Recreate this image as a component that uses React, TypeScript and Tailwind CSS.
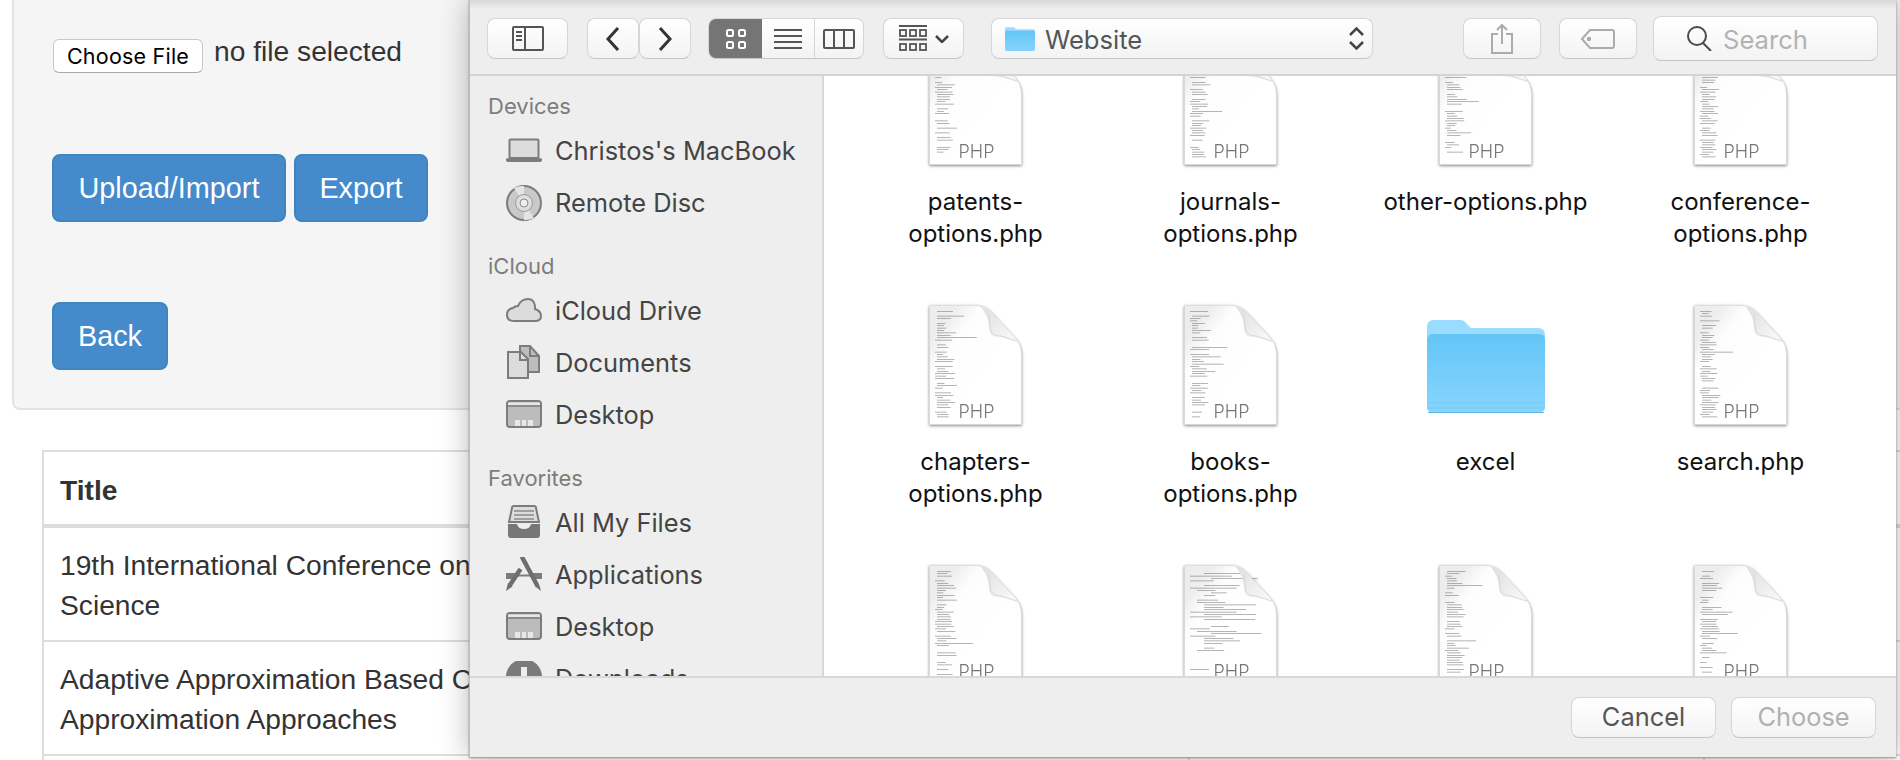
import type { ReactNode } from "react";

const SANS = "font-['Liberation_Sans',Arial,sans-serif]";
const SYS = "font-['Inter','Noto_Sans',sans-serif]";

// fake source code printed on the document thumbnails
function codeLines(seed: number, wide: boolean) {
  const lines: { x: number; y: number; w: number }[] = [];
  let r = seed;
  const next = () => {
    r = (r * 9301 + 49297) % 233280;
    return r / 233280;
  };
  for (let y = 6; y < 114; y += 2.4) {
    const v = next();
    if (v < 0.16) continue;
    const indent = wide ? Math.floor(next() * 4) * 7 : next() < 0.7 ? 2 : 0;
    const len = wide ? 10 + next() * 46 : v > 0.92 ? 18 + next() * 22 : 6 + next() * 14;
    if (y > 92 && indent + len > 20) continue;
    lines.push({ x: 6 + indent, y, w: Math.min(len, 78 - indent) });
  }
  return lines;
}

function DocIcon({ seed, wide = false }: { seed: number; wide?: boolean }) {
  const d = "M0.5 0.5H46Q56 0.5 62 7L86 33Q92.5 40 92.5 50V119.5H0.5Z";
  return (
    <svg width="94" height="124" viewBox="0 0 94 124" className="drop-shadow-[0_1px_1.5px_rgba(0,0,0,0.5)]">
      <defs>
        <linearGradient id="pageFill" x1="0.3" y1="0" x2="0.75" y2="0.45">
          <stop offset="0" stopColor="#ededed" />
          <stop offset="0.3" stopColor="#fdfdfd" />
          <stop offset="1" stopColor="#fff" />
        </linearGradient>
        <linearGradient id="foldFill" x1="0" y1="0" x2="1" y2="1">
          <stop offset="0" stopColor="#dedede" />
          <stop offset="1" stopColor="#ffffff" />
        </linearGradient>
      </defs>
      <path d={d} fill="url(#pageFill)" stroke="#dcdcdc" strokeWidth="0.6" />
      {codeLines(seed, wide).map((l, i) => (
        <rect key={i} x={l.x} y={l.y} width={l.w} height="0.6" fill="#666" opacity="0.8" />
      ))}
      <path d="M52 2Q56 2 62 7L86 33Q90 38 91 42Q80 32 68 32Q60 31 60 24Q60 12 52 2Z" fill="url(#foldFill)" />
      <path d="M60 9Q61 24 62 26Q64 31 72 31L88 36" fill="none" stroke="#d0d0d0" strokeWidth="0.8" />
      <text x="29.5" y="113" fontSize="18" fontWeight="300" fill="#767676" fontFamily="Inter, sans-serif">
        PHP
      </text>
    </svg>
  );
}

function FolderIcon({ width = 118, height = 93 }: { width?: number; height?: number }) {
  return (
    <svg width={width} height={height} viewBox="0 0 118 93">
      <defs>
        <linearGradient id="folderFront" x1="0" y1="0" x2="0" y2="1">
          <stop offset="0" stopColor="#63c5f6" />
          <stop offset="1" stopColor="#88d5fd" />
        </linearGradient>
      </defs>
      <path d="M0 7Q0 0 7 0H33Q37 0 39 3L44 8H111Q118 8 118 15V86Q118 93 111 93H7Q0 93 0 86Z" fill="#9adcff" />
      <path d="M0 20Q0 14 6 14H112Q118 14 118 20V86Q118 93 111 93H7Q0 93 0 86Z" fill="url(#folderFront)" />
      <path d="M0 83H118M0 88H118" stroke="#6ec6f2" strokeWidth="1" opacity="0.7" />
      <path d="M1 92.5H117" stroke="#5fb6e4" strokeWidth="1" />
    </svg>
  );
}

const IC = { stroke: "#7c7c7c", fill: "#dcdcdc", strokeWidth: 2 };

const sidebarIcons: Record<string, ReactNode> = {
  laptop: (
    <>
      <path d="M3.5 7.5Q3.5 6.5 4.5 6.5H31.5Q32.5 6.5 32.5 7.5V25H3.5Z" {...IC} />
      <path d="M0 25.5H36V27Q36 29 34 29H2Q0 29 0 27Z" fill="#7c7c7c" />
    </>
  ),
  disc: (
    <>
      <circle cx="18" cy="18" r="17" fill="#c9c9c9" stroke="#7c7c7c" strokeWidth="2" />
      <path d="M18 18L8 3A18 18 0 0 1 18 1ZM18 18L28 33A18 18 0 0 1 18 35Z" fill="#e4e4e4" />
      <circle cx="18" cy="18" r="8.5" fill="#dedede" stroke="#9a9a9a" strokeWidth="1" />
      <circle cx="18" cy="18" r="4" fill="#eee" stroke="#8a8a8a" strokeWidth="1" />
    </>
  ),
  cloud: <path d="M8 28Q1 28 1 22Q1 16 7 15Q9 13 12 13Q15 6 22 6Q28 6 29 13Q29 15 29 16Q35 18 35 23Q35 28 29 28Z" {...IC} />,
  docs: (
    <>
      <path d="M14 1H24L33 11V27H14Z" fill="#bdbdbd" stroke="#7c7c7c" strokeWidth="2" />
      <path d="M2 7H15L22 14V33H2Z" {...IC} />
      <path d="M14 7V15H22M24 1V11H33" fill="none" stroke="#7c7c7c" strokeWidth="2" />
    </>
  ),
  desktop: (
    <>
      <rect x="1" y="4" width="34" height="26" rx="3" fill="#bcbcbc" stroke="#7c7c7c" strokeWidth="2" />
      <path d="M1 9H35" stroke="#7c7c7c" strokeWidth="1.5" />
      <path d="M2 5.5H34V8H2Z" fill="#e6e6e6" />
      <path d="M9 23H27V29H9Z" fill="#e8e8e8" />
      <path d="M15 23V29M21 23V29" stroke="#8c8c8c" strokeWidth="1" />
    </>
  ),
  files: (
    <>
      <path d="M6 3Q6 1 8 1H28Q30 1 30 3L33 17H3Z" fill="#dcdcdc" stroke="#7c7c7c" strokeWidth="2" />
      <path d="M8 6H28M8 10H28M8 14H28" stroke="#8a8a8a" strokeWidth="1.5" />
      <path d="M2 19H11Q12 24 18 24Q24 24 25 19H34V30Q34 33 31 33H5Q2 33 2 30Z" fill="#777" />
    </>
  ),
  apps: (
    <>
      <path d="M0 16H10L7 22H0ZM26 16H36V22H29Z" fill="#7c7c7c" />
      <path d="M11 18.5H25" stroke="#7c7c7c" strokeWidth="2" />
      <path d="M16.5 1L30.5 27" stroke="#6e6e6e" strokeWidth="4.5" strokeLinecap="round" fill="none" />
      <path d="M28.5 29L33 27L35 34Z" fill="#6e6e6e" />
      <path d="M14.5 12L4 28" stroke="#6e6e6e" strokeWidth="4.5" fill="none" />
      <path d="M2 26L6.5 29.5L0 34Z" fill="#6e6e6e" />
    </>
  ),
  download: (
    <>
      <circle cx="18" cy="16" r="18" fill="#7a7a7a" />
      <path d="M15 6H21V17H27L18 28L9 17H15Z" fill="#eee" />
    </>
  ),
};

const sidebarGroups = [
  {
    title: "Devices",
    items: [
      { label: "Christos's MacBook", icon: "laptop" },
      { label: "Remote Disc", icon: "disc" },
    ],
  },
  {
    title: "iCloud",
    items: [
      { label: "iCloud Drive", icon: "cloud" },
      { label: "Documents", icon: "docs" },
      { label: "Desktop", icon: "desktop" },
    ],
  },
  {
    title: "Favorites",
    items: [
      { label: "All My Files", icon: "files" },
      { label: "Applications", icon: "apps" },
      { label: "Desktop", icon: "desktop" },
      { label: "Downloads", icon: "download" },
    ],
  },
];

const files: { name: string; seed: number; folder?: boolean; wide?: boolean }[] = [
  { name: "patents-options.php", seed: 11 },
  { name: "journals-options.php", seed: 23 },
  { name: "other-options.php", seed: 37 },
  { name: "conference-options.php", seed: 41 },
  { name: "chapters-options.php", seed: 53 },
  { name: "books-options.php", seed: 67 },
  { name: "excel", seed: 0, folder: true },
  { name: "search.php", seed: 79 },
  { name: "index.php", seed: 83 },
  { name: "import.php", seed: 97, wide: true },
  { name: "export.php", seed: 101 },
  { name: "upload.php", seed: 113 },
];

const toolBtn =
  "flex items-center justify-center h-[41px] rounded-lg border border-[#d6d6d6] border-b-[#c4c4c4] bg-linear-to-b from-white to-[#f3f3f3]";

function Toolbar() {
  return (
    <div className="flex items-center h-[76px] shrink-0 pl-[17px] pt-[3px] border-b-2 border-[#d4d4d4] bg-linear-to-b from-[#d8d8d8] via-[#eeeeee] via-[12%] to-[#eeeeee]">
      <button className={`${toolBtn} w-[81px]`}>
        <svg width="32" height="25" viewBox="0 0 32 25" fill="none" stroke="#555" strokeWidth="2">
          <rect x="1" y="1" width="30" height="23" rx="1" />
          <path d="M13 1V24M4 6H10M4 10H10M4 14H10" />
        </svg>
      </button>
      <button className={`${toolBtn} w-[52px] ml-[19px]`}>
        <svg width="14" height="24" viewBox="0 0 14 24" fill="none" stroke="#333" strokeWidth="3">
          <path d="M12 1L2 12L12 23" />
        </svg>
      </button>
      <button className={`${toolBtn} w-[52px]`}>
        <svg width="14" height="24" viewBox="0 0 14 24" fill="none" stroke="#333" strokeWidth="3">
          <path d="M2 1L12 12L2 23" />
        </svg>
      </button>
      <div className={`${toolBtn} w-[156px] ml-[17px] overflow-hidden`}>
        <div className="flex items-center justify-center w-[54px] h-full bg-[#757575]">
          <svg width="20" height="20" viewBox="0 0 20 20" fill="none" stroke="#fff" strokeWidth="2">
            <rect x="1" y="1" width="6" height="6" rx="1.5" />
            <rect x="13" y="1" width="6" height="6" rx="1.5" />
            <rect x="1" y="13" width="6" height="6" rx="1.5" />
            <rect x="13" y="13" width="6" height="6" rx="1.5" />
          </svg>
        </div>
        <div className="flex items-center justify-center w-[53px] h-full border-r border-[#d6d6d6]">
          <svg width="28" height="20" viewBox="0 0 28 20" stroke="#555" strokeWidth="2">
            <path d="M0 1H28M0 7H28M0 13H28M0 19H28" />
          </svg>
        </div>
        <div className="flex items-center justify-center w-[49px] h-full">
          <svg width="32" height="20" viewBox="0 0 32 20" fill="none" stroke="#555" strokeWidth="2">
            <rect x="1" y="1" width="30" height="18" rx="1" />
            <path d="M11 1V19M21 1V19" />
          </svg>
        </div>
      </div>
      <button className={`${toolBtn} w-[81px] ml-[19px] gap-[8px]`}>
        <svg width="28" height="27" viewBox="0 0 28 27" fill="none" stroke="#555" strokeWidth="1.8">
          <path d="M0 1H28M0 14.5H28" strokeWidth="2.2" />
          <rect x="1" y="5" width="6" height="6" />
          <rect x="11" y="5" width="6" height="6" />
          <rect x="21" y="5" width="6" height="6" />
          <rect x="1" y="19" width="6" height="6" />
          <rect x="11" y="19" width="6" height="6" />
          <rect x="21" y="19" width="6" height="6" />
        </svg>
        <svg width="14" height="8" viewBox="0 0 14 8" fill="none" stroke="#444" strokeWidth="2.5">
          <path d="M1 1L7 7L13 1" />
        </svg>
      </button>
      <div className={`${toolBtn} w-[382px] ml-[27px] !justify-start pl-[13px] pr-[8px]`}>
        <FolderIcon width={30} height={24} />
        <span className={`${SYS} ml-[10px] mt-[3px] text-[25.6px] text-[#555]`}>Website</span>
        <svg className="ml-auto" width="15" height="23" viewBox="0 0 15 23" fill="none" stroke="#444" strokeWidth="2.5">
          <path d="M1 8L7.5 1.5L14 8M1 15L7.5 21.5L14 15" />
        </svg>
      </div>
      <button className={`${toolBtn} w-[78px] ml-[90px]`}>
        <svg width="22" height="30" viewBox="0 0 22 30" fill="none" stroke="#ababab" strokeWidth="2">
          <path d="M7 10H1V29H21V10H15M11 20V1.5M6 6L11 1L16 6" />
        </svg>
      </button>
      <button className={`${toolBtn} w-[78px] ml-[18px]`}>
        <svg width="34" height="20" viewBox="0 0 34 20" fill="none" stroke="#ababab" strokeWidth="2">
          <path d="M9 1H31Q33 1 33 3V17Q33 19 31 19H9L1 10Z" />
          <circle cx="8" cy="10" r="1.2" fill="#ababab" />
        </svg>
      </button>
      <div className={`${toolBtn} !h-[45px] w-[225px] ml-[16px] !justify-start pl-[33px]`}>
        <svg width="25" height="25" viewBox="0 0 25 25" fill="none" stroke="#4a4a4a" strokeWidth="2">
          <circle cx="10" cy="10" r="9" />
          <path d="M16 17L24 25" />
        </svg>
        <span className={`${SYS} ml-[11px] mt-[3px] text-[25.6px] text-[#b2b2b2]`}>Search</span>
      </div>
    </div>
  );
}

function Sidebar() {
  return (
    <div className="w-[354px] shrink-0 h-full overflow-hidden pt-[11px] bg-[#eeeeee] border-r-2 border-[#d8d8d8]">
      {sidebarGroups.map((g) => (
        <div key={g.title} className="mb-[18px]">
          <div className={`${SYS} flex items-center h-[38px] pl-[18px] text-[22px] text-[#7d7d7d]`}>{g.title}</div>
          {g.items.map((it, i) => (
            <div key={i} className="flex items-center h-[52px] pl-[36px] gap-[13px]">
              <svg width="36" height="36" viewBox="0 0 36 36" className="shrink-0">
                {sidebarIcons[it.icon]}
              </svg>
              <span className={`${SYS} mt-[1px] text-[25.4px] text-[#444]`}>{it.label}</span>
            </div>
          ))}
        </div>
      ))}
    </div>
  );
}

function FileGrid() {
  return (
    <div className="flex-1 h-full overflow-hidden bg-white">
      <div className="grid grid-cols-[repeat(4,255px)] -mt-[29px] pl-[24px]">
        {files.map((f) => (
          <div key={f.name} className="flex flex-col items-center h-[260px]">
            <div className="flex items-center justify-center h-[119px]">
              {f.folder ? <FolderIcon /> : <DocIcon seed={f.seed} wide={f.wide} />}
            </div>
            <div className={`${SYS} mt-[20px] max-w-[212px] text-center text-[24px] leading-[32px] text-[#111]`}>{f.name}</div>
          </div>
        ))}
      </div>
    </div>
  );
}

function FinderDialog() {
  return (
    <div className="absolute left-[469px] top-0 w-[1427px] h-[757px] flex flex-col bg-[#eeeeee] border-l border-[#bdbdbd] shadow-[0_1px_2px_#8a8a8a,0_0_28px_rgba(0,0,0,0.28)]">
      <Toolbar />
      <div className="flex flex-1 min-h-0">
        <Sidebar />
        <FileGrid />
      </div>
      <div className="flex items-center justify-end h-[81px] shrink-0 pr-[20px] gap-[15px] border-t-2 border-[#d8d8d8]">
        <button className={`${toolBtn} ${SYS} w-[145px] text-[25.4px] text-[#555]`}>Cancel</button>
        <button className={`${toolBtn} ${SYS} w-[145px] text-[25.4px] text-[#b0b0b0]`}>Choose</button>
      </div>
    </div>
  );
}

const blueBtn =
  "h-[68px] pt-[2px] rounded-lg border-2 border-[#3f83bf] bg-[#458acb] text-[28.8px] text-white";

export default function App() {
  return (
    <div className={`${SANS} relative h-[760px] overflow-hidden bg-white text-[#333]`}>
      <div className="ml-[12px] h-[410px] pl-[38px] pt-[39px] bg-[#f5f5f5] border-l-2 border-b-2 border-[#e3e3e3] rounded-bl-lg">
        <div className="flex items-start h-[34px]">
          <button className={`${SYS} w-[150px] h-[34px] ml-[1px] rounded-md border border-[#c8c8c8] border-b-[#aaa] bg-white text-[21.5px] tracking-[0.01em] text-black`}>
            Choose File
          </button>
          <span className="ml-[11px] -mt-[8px] text-[28.2px] leading-[40px]">no file selected</span>
        </div>
        <div className="flex gap-[8px] mt-[81px]">
          <button className={`${blueBtn} w-[234px]`}>Upload/Import</button>
          <button className={`${blueBtn} w-[134px]`}>Export</button>
        </div>
        <button className={`${blueBtn} w-[116px] mt-[80px]`}>Back</button>
      </div>

      <table className="ml-[42px] mt-[40px] w-[1900px] table-fixed text-[28.2px] leading-[40px]">
        <colgroup>
          <col className="w-[1146px]" />
          <col className="w-[515px]" />
          <col />
        </colgroup>
        <thead>
          <tr>
            <th className="border-2 border-b-4 border-[#ddd] px-[16px] pt-[18px] pb-[14px] text-left font-bold">Title</th>
            <th className="border-2 border-b-4 border-[#ddd] px-[16px] pt-[18px] pb-[14px] text-left font-bold">Authors</th>
            <th className="border-2 border-b-4 border-[#ddd] px-[16px] pt-[18px] pb-[14px] text-left font-bold">Year</th>
          </tr>
        </thead>
        <tbody>
          <tr>
            <td className="border-2 border-[#ddd] px-[16px] pt-[17px] pb-[15px]">
              19th International Conference on Computer
              <br />
              Science
            </td>
            <td className="border-2 border-[#ddd] p-[16px]"></td>
            <td className="border-2 border-[#ddd] p-[16px]"></td>
          </tr>
          <tr>
            <td className="border-2 border-[#ddd] px-[16px] pt-[17px] pb-[15px]">
              Adaptive Approximation Based Control
              <br />
              Approximation Approaches
            </td>
            <td className="border-2 border-[#ddd] p-[16px]"></td>
            <td className="border-2 border-[#ddd] p-[16px]"></td>
          </tr>
          <tr>
            <td className="border-2 border-[#ddd] p-[16px]">&nbsp;</td>
            <td className="border-2 border-[#ddd] p-[16px]"></td>
            <td className="border-2 border-[#ddd] p-[16px]"></td>
          </tr>
        </tbody>
      </table>

      <FinderDialog />
    </div>
  );
}
